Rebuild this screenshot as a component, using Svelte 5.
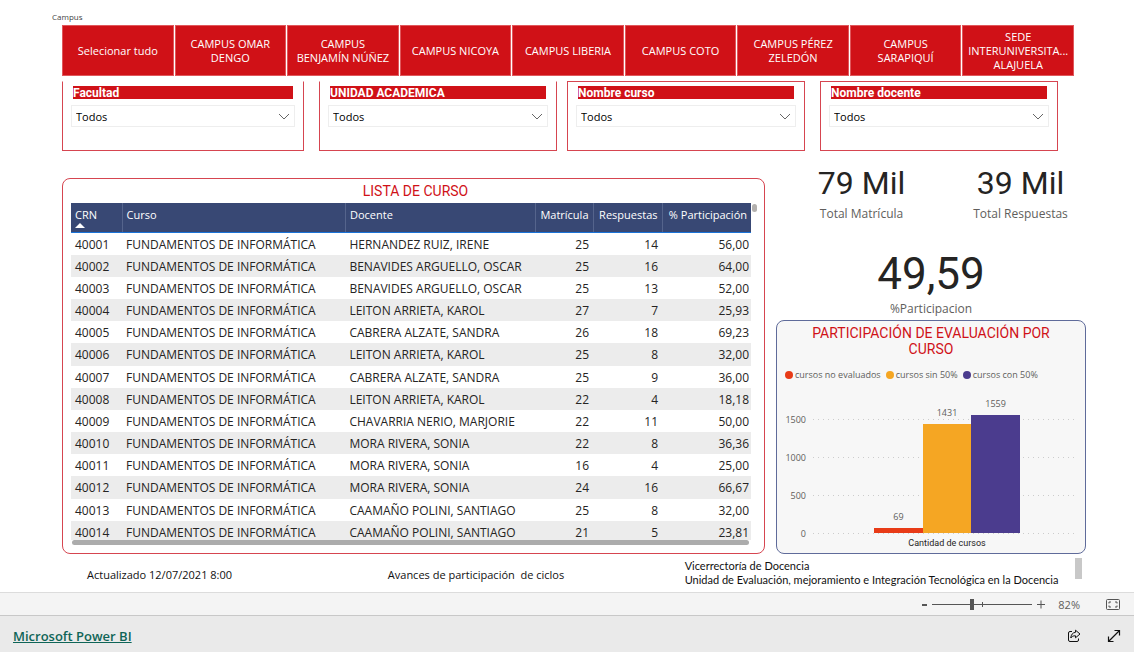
<script lang="ts">
  let selected = $state("");
  let zoom = $state(82);

  const campuses = [
    "Selecionar tudo",
    "CAMPUS OMAR\nDENGO",
    "CAMPUS\nBENJAMÍN NÚÑEZ",
    "CAMPUS NICOYA",
    "CAMPUS LIBERIA",
    "CAMPUS COTO",
    "CAMPUS PÉREZ\nZELEDÓN",
    "CAMPUS\nSARAPIQUÍ",
    "SEDE\nINTERUNIVERSITA...\nALAJUELA",
  ];

  const filterGroups = [
    [
      { id: "facultad", label: "Facultad", open: true },
      { id: "unidad", label: "UNIDAD ACADEMICA", open: true },
    ],
    [
      { id: "curso", label: "Nombre curso", open: false },
      { id: "docente", label: "Nombre docente", open: false },
    ],
  ];

  const course = "FUNDAMENTOS DE INFORMÁTICA";
  const rows = [
    [40001, "HERNANDEZ RUIZ, IRENE", 25, 14, "56,00"],
    [40002, "BENAVIDES ARGUELLO, OSCAR", 25, 16, "64,00"],
    [40003, "BENAVIDES ARGUELLO, OSCAR", 25, 13, "52,00"],
    [40004, "LEITON ARRIETA, KAROL", 27, 7, "25,93"],
    [40005, "CABRERA ALZATE, SANDRA", 26, 18, "69,23"],
    [40006, "LEITON ARRIETA, KAROL", 25, 8, "32,00"],
    [40007, "CABRERA ALZATE, SANDRA", 25, 9, "36,00"],
    [40008, "LEITON ARRIETA, KAROL", 22, 4, "18,18"],
    [40009, "CHAVARRIA NERIO, MARJORIE", 22, 11, "50,00"],
    [40010, "MORA RIVERA, SONIA", 22, 8, "36,36"],
    [40011, "MORA RIVERA, SONIA", 16, 4, "25,00"],
    [40012, "MORA RIVERA, SONIA", 24, 16, "66,67"],
    [40013, "CAAMAÑO POLINI, SANTIAGO", 25, 8, "32,00"],
    [40014, "CAAMAÑO POLINI, SANTIAGO", 21, 5, "23,81"],
  ];

  const chartMax = 1750;
  const ticks = [0, 500, 1000, 1500];
  const series = [
    { name: "cursos no evaluados", value: 69, color: "#e83b17" },
    { name: "cursos sin 50%", value: 1431, color: "#f5a623" },
    { name: "cursos con 50%", value: 1559, color: "#4b3c8e" },
  ];

  const pct = (value: number) => (value / chartMax) * 100;
</script>

<main class="report">
  <div class="slicer-title">Campus</div>
  <div class="campuses">
    {#each campuses as campus}
      <button class="campus" class:active={selected === campus} onclick={() => (selected = campus)}>{campus}</button>
    {/each}
  </div>

  <div class="filters">
    {#each filterGroups as group}
      <div class="filter-group">
        {#each group as filter}
          <div class="filter" class:open={filter.open}>
            <label for={filter.id}>{filter.label}</label>
            <div class="select-wrap">
              <select id={filter.id}>
                <option>Todos</option>
              </select>
              <svg width="12" height="7" viewBox="0 0 12 7" aria-hidden="true">
                <path d="M1 1l5 5 5-5" fill="none" stroke="#666" />
              </svg>
            </div>
          </div>
        {/each}
      </div>
    {/each}
  </div>

  <div class="content">
    <section class="card list">
      <h2>LISTA DE CURSO</h2>
      <div class="table-area">
        <div class="table-scroll">
          <table>
            <colgroup>
              <col class="c-crn" />
              <col class="c-course" />
              <col class="c-teacher" />
              <col class="c-enrolled" />
              <col class="c-answers" />
              <col class="c-share" />
            </colgroup>
            <thead>
              <tr>
                <th>
                  CRN
                  <svg class="sort" width="10" height="5" viewBox="0 0 10 5" aria-hidden="true">
                    <path d="M0 5L5 0l5 5z" fill="#fff" />
                  </svg>
                </th>
                <th>Curso</th>
                <th>Docente</th>
                <th class="num">Matrícula</th>
                <th class="num">Respuestas</th>
                <th class="num">% Participación</th>
              </tr>
            </thead>
            <tbody>
              {#each rows as [crn, teacher, enrolled, answers, share]}
                <tr>
                  <td>{crn}</td>
                  <td>{course}</td>
                  <td>{teacher}</td>
                  <td class="num">{enrolled}</td>
                  <td class="num">{answers}</td>
                  <td class="num last">{share}</td>
                </tr>
              {/each}
            </tbody>
          </table>
        </div>
        <div class="v-thumb"></div>
      </div>
      <div class="h-thumb"></div>
    </section>

    <div class="side">
      <div class="kpis">
        <div class="kpi">
          <div class="value">79 Mil</div>
          <div class="caption">Total Matrícula</div>
        </div>
        <div class="kpi">
          <div class="value">39 Mil</div>
          <div class="caption">Total Respuestas</div>
        </div>
      </div>
      <div class="kpi big">
        <div class="value">49,59</div>
        <div class="caption">%Participacion</div>
      </div>

      <section class="card chart">
        <h2>PARTICIPACIÓN DE EVALUACIÓN POR CURSO</h2>
        <div class="legend">
          {#each series as s}
            <span><i style="background: {s.color}"></i>{s.name}</span>
          {/each}
        </div>
        <div class="plot">
          {#each ticks as tick}
            <div class="tick" style="bottom: {pct(tick)}%">
              <span>{tick}</span>
              <b></b>
            </div>
          {/each}
          <div class="bars">
            {#each series as s}
              <div class="bar-col">
                <span>{s.value}</span>
                <div class="bar" style="height: {pct(s.value)}%; background: {s.color}"></div>
              </div>
            {/each}
          </div>
        </div>
        <div class="axis-label">Cantidad de cursos</div>
      </section>
    </div>
  </div>

  <div class="notes">
    <p>Actualizado 12/07/2021 8:00</p>
    <p><b>Avances</b> de participación &nbsp;de ciclos</p>
    <p class="office">
      Vicerrectoría de Docencia<br />
      Unidad de Evaluación, mejoramiento e Integración Tecnológica en la Docencia
    </p>
    <div class="note-thumb"></div>
  </div>
</main>

<div class="zoom-bar">
  <button aria-label="Zoom out" onclick={() => (zoom -= 1)}>
    <svg width="5" height="9" viewBox="0 0 5 9"><path d="M0 5h5" stroke="#555" stroke-width="2" /></svg>
  </button>
  <div class="slider">
    <input type="range" min="0" max="210" bind:value={zoom} aria-label="Zoom" />
  </div>
  <button aria-label="Zoom in" onclick={() => (zoom += 1)}>
    <svg width="8" height="9" viewBox="0 0 8 9"><path d="M0 4.500h8M4 .5v8" stroke="#555" /></svg>
  </button>
  <span class="percent">{zoom}%</span>
  <button class="fit" aria-label="Fit to page">
    <svg width="14" height="11" viewBox="0 0 14 11" fill="none" stroke="#555">
      <rect x=".5" y=".5" width="13" height="10" rx="1" />
      <path d="M3 4.500V3h2M9 3h2v1.500M11 6.500V8H9M5 8H3V6.500" />
    </svg>
  </button>
</div>

<footer>
  <a href="https://powerbi.microsoft.com">Microsoft Power BI</a>
  <div class="actions">
    <button aria-label="Share">
      <svg width="14" height="14" viewBox="0 0 14 14" fill="none" stroke="#111" stroke-linejoin="round">
        <path d="M5 2.500H3a1.500 1.500 0 0 0-1.500 1.500V11a1.500 1.500 0 0 0 1.500 1.500h7A1.500 1.500 0 0 0 11.500 11V9.500" />
        <path d="M8.500 1.200L13 5 8.500 8.800V6.800C6.200 6.700 4.800 7.400 3.800 9 4 5.800 5.600 3.600 8.500 3.300z" />
      </svg>
    </button>
    <button aria-label="Full screen">
      <svg width="14" height="14" viewBox="0 0 14 14" fill="none" stroke="#111" stroke-width="1.200">
        <path d="M1.500 12.500l11-11M7.500 1.500h5v5M1.500 7.500v5h5" />
      </svg>
    </button>
  </div>
</footer>

<style>
  :global(body) {
    background: #fff;
    color: #252423;
    font-family: "Open Sans", "Noto Sans", sans-serif;
    font-size: 12px;
  }

  button {
    padding: 0;
    border: 0;
    background: none;
    font: inherit;
    cursor: pointer;
  }

  h2,
  p {
    margin: 0;
  }

  .report {
    padding: 10px 48px 0 52px;
  }

  .slicer-title {
    color: #444;
    font-size: 8px;
    line-height: 14px;
    padding-bottom: 1px;
  }

  .campuses {
    display: grid;
    grid-template-columns: repeat(9, 1fr);
    gap: 1px;
    margin: 0 12px 0 10px;
  }

  .campus {
    height: 51px;
    border: 1px solid #e0575b;
    background: #d01117;
    color: #fff;
    font-size: 11px;
    line-height: 14px;
    white-space: pre;
  }

  .campus.active {
    background: #a80d12;
  }

  .filters {
    display: grid;
    grid-template-columns: 495fr 491fr;
    gap: 10px;
    margin: 5px 28px 0 10px;
  }

  .filter-group {
    display: grid;
    grid-template-columns: 1fr 1fr;
    gap: 15px;
  }

  .filter-group:first-child {
    grid-template-columns: 242fr 238fr;
  }

  .filter {
    box-sizing: border-box;
    height: 70px;
    padding: 4px 8px;
    border: 1px solid #d64550;
  }

  .filter.open {
    border-top-color: transparent;
  }

  .filter label {
    display: block;
    margin: 0 2px 6px;
    padding-top: 1px;
    background: #d01117;
    color: #fff;
    font: bold 12px/12px Roboto, sans-serif;
  }

  .select-wrap {
    position: relative;
  }

  .select-wrap svg {
    position: absolute;
    top: 8px;
    right: 5px;
    pointer-events: none;
  }

  select {
    width: 100%;
    height: 22px;
    padding: 0 4px;
    appearance: none;
    border: 1px solid #eee;
    border-radius: 0;
    background: #fff;
    color: #000;
    font: inherit;
    font-size: 11px;
  }

  .content {
    display: grid;
    grid-template-columns: 703fr 310fr;
    gap: 11px;
    margin: 12px 0 0 10px;
  }

  .card {
    box-sizing: border-box;
    border: 1px solid #d64550;
    border-radius: 8px;
  }

  h2 {
    color: #d01117;
    font: 14px/16px Roboto, sans-serif;
    text-align: center;
  }

  .list {
    height: 376px;
    margin-top: 15px;
    padding: 4px 4px 4px 8px;
  }

  .table-area {
    display: flex;
    gap: 1px;
    margin-top: 4px;
  }

  .table-scroll {
    flex: 1;
    height: 337px;
    overflow: hidden;
  }

  .v-thumb {
    width: 5px;
    height: 8px;
    margin: 1px 3px 0 0;
    border-radius: 3px;
    background: #b3b0ad;
  }

  .h-thumb {
    height: 5px;
    margin: 0 11px 0 1px;
    border-radius: 3px;
    background: #acacac;
  }

  table {
    width: 100%;
    height: 340px;
    border-collapse: collapse;
    table-layout: fixed;
  }

  .c-crn {
    width: 51px;
  }

  .c-course {
    width: 33%;
  }

  .c-teacher {
    width: 28%;
  }

  .c-enrolled {
    width: 58px;
  }

  .c-answers {
    width: 69px;
  }

  .c-share {
    width: 89px;
  }

  th,
  td {
    padding: 1px 4px 0;
    text-align: left;
    white-space: nowrap;
  }

  th {
    box-sizing: border-box;
    height: 29px;
    padding-top: 4px;
    border-bottom: 1px solid #1a73d8;
    border-left: 1px solid #55648c;
    background: #384874;
    color: #fff;
    font-size: 11px;
    font-weight: 400;
    line-height: 15px;
    vertical-align: top;
  }

  th:first-child {
    border-left: 0;
  }

  .sort {
    display: block;
    margin-top: 1px;
  }

  tbody tr:nth-child(even) {
    background: #ececec;
  }

  .num {
    text-align: right;
  }

  .last {
    padding-right: 2px;
  }

  .kpis {
    display: grid;
    grid-template-columns: 1fr 1fr;
    margin: 0 -14px 0 6px;
  }

  .kpi {
    color: #252423;
    text-align: center;
  }

  .value {
    font: 32px/40px Roboto, sans-serif;
  }

  .caption {
    padding-top: 1px;
    color: #605e5c;
    font-size: 12px;
    line-height: 20px;
  }

  .kpi.big {
    margin-top: 26px;
  }

  .kpi.big .value {
    font-size: 44px;
    line-height: 48px;
  }

  .chart {
    height: 234px;
    margin-top: 1px;
    padding: 4px 8px 3px;
    border-color: #5f6b9a;
    background: #f7f7f7;
  }

  .chart h2 {
    padding: 0 20px;
  }

  .legend {
    display: flex;
    gap: 5px;
    margin-top: 11px;
    color: #605e5c;
    font-size: 9px;
    line-height: 14px;
  }

  .legend span {
    display: flex;
    align-items: center;
    gap: 2px;
    white-space: nowrap;
  }

  .legend i {
    width: 8px;
    height: 8px;
    border-radius: 50%;
  }

  .plot {
    position: relative;
    height: 133px;
    margin-top: 18px;
    padding-left: 32px;
  }

  .tick {
    position: absolute;
    right: 0;
    left: 0;
    display: flex;
    align-items: center;
    gap: 7px;
    height: 12px;
    margin-bottom: -6px;
    color: #605e5c;
    font-size: 9px;
  }

  .tick span {
    width: 21px;
    text-align: right;
  }

  .tick b {
    flex: 1;
    height: 1px;
    background: repeating-linear-gradient(90deg, #ccc 0 1px, transparent 1px 5px);
  }

  .bars {
    position: relative;
    display: flex;
    width: 56%;
    height: 100%;
    margin: 0 auto;
  }

  .bar-col {
    display: flex;
    flex: 1;
    flex-direction: column;
    justify-content: flex-end;
    color: #605e5c;
    font-size: 9px;
    line-height: 12px;
    text-align: center;
  }

  .bar-col span {
    margin-bottom: 5px;
  }

  .bar {
    flex: none;
  }

  .axis-label {
    padding-left: 32px;
    font: 9px/20px Roboto, sans-serif;
    text-align: center;
  }

  .notes {
    display: grid;
    grid-template-columns: 299fr 295fr 388fr 7px;
    align-items: center;
    height: 38px;
    margin: 0 4px 0 35px;
    color: #111;
    font-size: 11px;
    line-height: 14px;
    white-space: nowrap;
  }

  .notes p {
    padding-top: 4px;
  }

  .notes b {
    font-weight: 500;
  }

  .notes .office {
    padding-top: 0;
    font-family: Lato, sans-serif;
  }

  .note-thumb {
    align-self: start;
    width: 7px;
    height: 21px;
    margin-top: 4px;
    background: #c8c8c8;
  }

  .zoom-bar {
    display: flex;
    align-items: center;
    justify-content: flex-end;
    gap: 5px;
    height: 22px;
    padding-right: 14px;
    border-top: 1px solid #dcdcdc;
    background: #f4f4f4;
    color: #605e5c;
  }

  .zoom-bar button,
  .actions button {
    display: flex;
  }

  .slider {
    position: relative;
    display: flex;
    width: 100px;
  }

  .slider::before {
    position: absolute;
    top: 4px;
    left: 50%;
    width: 1px;
    height: 5px;
    background: #555;
    content: "";
  }

  input {
    width: 100%;
    height: 12px;
    margin: 0;
    appearance: none;
    background: linear-gradient(#555, #555) center / 100% 1px no-repeat;
  }

  input::-webkit-slider-thumb {
    width: 4px;
    height: 11px;
    appearance: none;
    background: #555;
  }

  .percent {
    margin-left: 8px;
    font-size: 11px;
  }

  .fit {
    margin-left: 21px;
  }

  footer {
    display: flex;
    align-items: center;
    justify-content: space-between;
    height: 37px;
    padding: 3px 13px 0;
    box-sizing: border-box;
    border-top: 1px solid #c8c8c8;
    background: #eaeaea;
  }

  footer a {
    color: #0f6557;
    font-size: 13px;
    font-weight: 600;
  }

  .actions {
    display: flex;
    gap: 26px;
  }
</style>
